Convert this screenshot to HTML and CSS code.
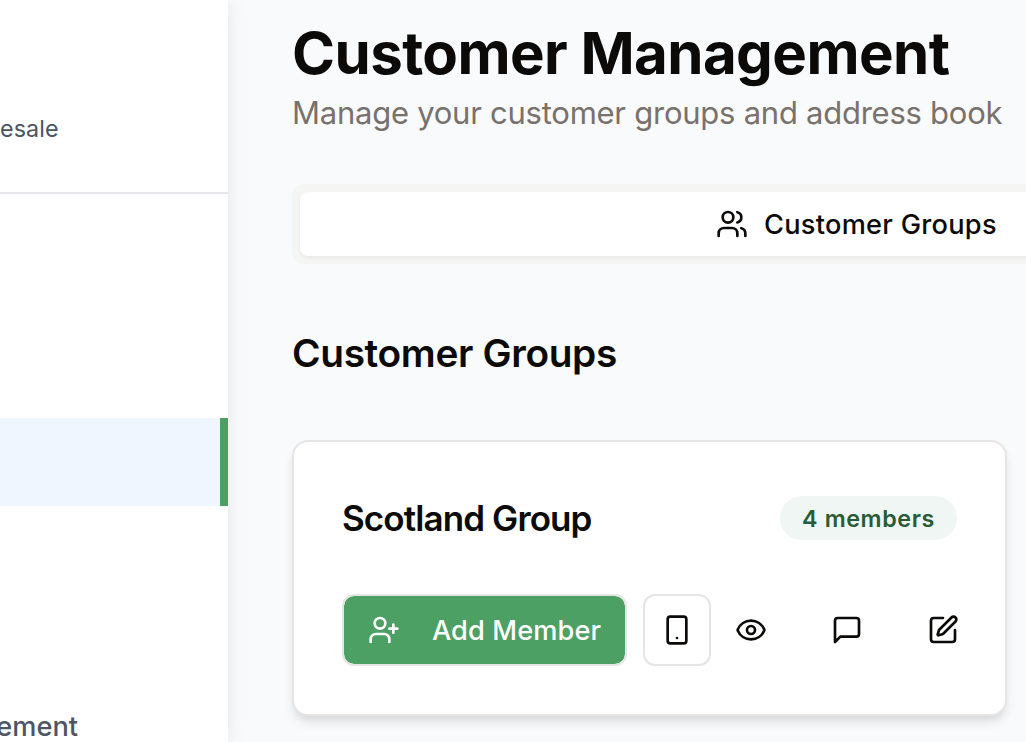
FILE: index.html
```html
<!DOCTYPE html>
<html lang="en">
<head>
<meta charset="utf-8">
<title>Customer Management</title>
<link rel="stylesheet" href="styles.css">
</head>
<body>
<div class="app">
  <aside class="sidebar">
    <div class="brand"><span class="brand-label">esale</span></div>
    <nav class="nav">
      <div class="nav-item active"></div>
      <div class="nav-item label"><span class="nav-text">ement</span></div>
    </nav>
  </aside>
  <main class="main">
    <h1 class="title">Customer Management</h1>
    <p class="subtitle">Manage your customer groups and address book</p>
    <div class="tabs">
      <div class="tab">
        <svg class="icon" viewBox="0 0 24 24"><path d="M16 21v-2a4 4 0 0 0-4-4H6a4 4 0 0 0-4 4v2"/><circle cx="9" cy="7" r="4"/><path d="M22 21v-2a4 4 0 0 0-3-3.87"/><path d="M16 3.13a4 4 0 0 1 0 7.75"/></svg>
        <span class="tab-text">Customer Groups</span>
      </div>
    </div>
    <h2 class="section-title">Customer Groups</h2>
    <section class="card">
      <div class="card-head">
        <h3 class="card-title">Scotland Group</h3>
        <span class="badge"><span class="badge-text">4 members</span></span>
      </div>
      <div class="actions">
        <button class="btn primary">
          <svg class="icon" viewBox="0 0 24 24"><path d="M16 21v-2a4 4 0 0 0-4-4H6a4 4 0 0 0-4 4v2"/><circle cx="9" cy="7" r="4"/><path d="M19 8v6M22 11h-6"/></svg>
          <span class="btn-text">Add Member</span>
        </button>
        <button class="btn outline"><svg class="icon" viewBox="0 0 24 24"><rect x="5" y="2" width="14" height="20" rx="2"/><path d="M12 18h.01"/></svg></button>
        <div class="ghosts">
          <button class="btn ghost"><svg class="icon" viewBox="0 0 24 24"><path d="M2.06 12.35a1 1 0 0 1 0-.7 10.75 10.75 0 0 1 19.88 0 1 1 0 0 1 0 .7 10.75 10.75 0 0 1-19.88 0"/><circle cx="12" cy="12" r="3"/></svg></button>
          <button class="btn ghost"><svg class="icon" viewBox="0 0 24 24"><path d="M21 15a2 2 0 0 1-2 2H7l-4 4V5a2 2 0 0 1 2-2h14a2 2 0 0 1 2 2z"/></svg></button>
          <button class="btn ghost"><svg class="icon" viewBox="0 0 24 24"><path d="M12 3H5a2 2 0 0 0-2 2v14a2 2 0 0 0 2 2h14a2 2 0 0 0 2-2v-7"/><path d="M18.375 2.625a1 1 0 0 1 3 3l-9.013 9.014a2 2 0 0 1-.853.505l-2.873.84a.5.5 0 0 1-.62-.62l.84-2.873a2 2 0 0 1 .506-.852z"/></svg></button>
        </div>
      </div>
    </section>
  </main>
</div>
</body>
</html>
```
FILE: styles.css
```css
* { box-sizing: border-box; }
body { margin: 0; font-family: Inter, "Liberation Sans", sans-serif; color: #0c0a09; background: #f9fafc; }
h1, h2, h3, p { margin: 0; white-space: nowrap; }
.app { display: flex; width: 1026px; height: 742px; overflow: hidden; }
.sidebar { width: 228px; flex: none; background: #fff; box-shadow: 0 0 12px rgba(0,0,0,.05), 0 0 30px rgba(0,0,0,.04); }
.brand { height: 194px; border-bottom: 2px solid #e5e7eb; padding-top: 113px; }
.brand-label { display: block; font-size: 23.3px; line-height: 32px; letter-spacing: .1px; color: #4b5563; }
.nav { padding-top: 224px; }
.nav-item { height: 88px; }
.active { background: #eff6ff; border-right: 8px solid #4ca064; }
.label { margin-top: 177px; display: flex; align-items: center; }
.nav-text { display: flex; justify-content: flex-end; width: 78px; font-size: 27.2px; line-height: 40px; font-weight: 500; color: #4b5563; }
.main { width: 798px; flex: none; padding: 17px 0 0 64px; }
.title { font-size: 58.2px; line-height: 72px; font-weight: 700; letter-spacing: -.57px; }
.subtitle { font-size: 31px; line-height: 48px; letter-spacing: -.25px; color: #78716c; }
.tabs { width: 1000px; height: 80px; margin-top: 47px; padding: 8px; border-radius: 12px; background: #f5f5f4; }
.tab { height: 64px; padding-left: 416px; display: flex; align-items: center; gap: 16px; border-radius: 8px; background: #fff; box-shadow: 0 2px 4px rgba(0,0,0,.05); font-size: 27.2px; letter-spacing: .27px; font-weight: 500; white-space: nowrap; }
.icon { width: 32px; height: 32px; flex: none; fill: none; stroke: currentColor; stroke-width: 2; stroke-linecap: round; stroke-linejoin: round; }
.section-title { margin-top: 61px; font-size: 38.8px; line-height: 56px; font-weight: 600; letter-spacing: -.35px; }
.card { width: 715px; height: 276px; margin-top: 59px; padding: 48px; border: 2px solid #e7e5e4; border-radius: 16px; background: #fff; box-shadow: 0 8px 12px -2px rgba(0,0,0,.1), 0 4px 8px -4px rgba(0,0,0,.1); }
.card-head { display: flex; justify-content: space-between; align-items: center; height: 56px; }
.card-title { font-size: 35px; font-weight: 600; letter-spacing: -.9px; }
.badge { width: 177px; height: 44px; display: flex; align-items: center; justify-content: center; border-radius: 22px; background: #eff6f4; color: #285c38; font-size: 23.3px; letter-spacing: .6px; font-weight: 600; white-space: nowrap; }
.actions { display: flex; margin-top: 48px; }
.btn { height: 72px; flex: none; display: flex; align-items: center; justify-content: center; padding: 0; border: 0; border-radius: 12px; background: transparent; color: #0c0a09; font-family: inherit; }
.primary { width: 285px; gap: 32px; border: 2px solid #e7e5e4; background: #4ca064; background-clip: padding-box; color: #fff; font-size: 27.2px; letter-spacing: .1px; font-weight: 500; }
.outline { width: 68px; margin-left: 16px; border: 2px solid #e7e5e4; background: #fff; }
.ghosts { display: flex; gap: 16px; }
.ghost { width: 80px; }
```
